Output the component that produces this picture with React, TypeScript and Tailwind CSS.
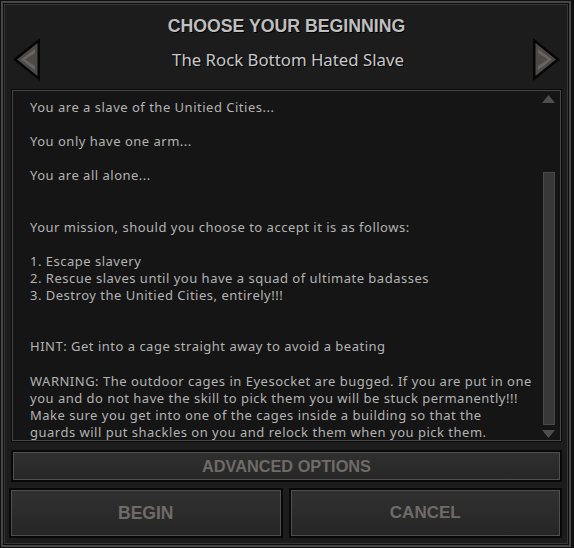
const lines: string[] = [
  "You are a slave of the Unitied Cities...",
  "",
  "You only have one arm...",
  "",
  "You are all alone...",
  "",
  "",
  "Your mission, should you choose to accept it is as follows:",
  "",
  "1. Escape slavery",
  "2. Rescue slaves until you have a squad of ultimate badasses",
  "3. Destroy the Unitied Cities, entirely!!!",
  "",
  "",
  "HINT: Get into a cage straight away to avoid a beating",
  "",
  "WARNING: The outdoor cages in Eyesocket are bugged. If you are put in one",
  "you and do not have the skill to pick them you will be stuck permanently!!!",
  "Make sure you get into one of the cages inside a building so that the",
  "guards will put shackles on you and relock them when you pick them.",
];

function Arrow({ dir }: { dir: "left" | "right" }) {
  return (
    <svg width="30" height="45" viewBox="0 0 30 45" className={dir === "right" ? "-scale-x-100" : ""}>
      <path d="M28 1 L28 44 L1 22.5 Z" fill="#050505" />
      <path d="M25.5 6 L25.5 39 L5 22.5 Z" fill="#4b4a49" />
      <path d="M23 12 L23 16 L13 22.5 L23 29 L23 33 L9 22.5 Z" fill="#686462" />
    </svg>
  );
}

function GameButton({ label, className }: { label: string; className: string }) {
  return (
    <div className={`border-2 border-[#080808] bg-[#080808] ${className}`}>
      <div className="flex h-full items-center justify-center border border-[#4f4f4f] bg-gradient-to-b from-[#303030] to-[#262626]">
        <span className="font-['Liberation_Sans',Arial,sans-serif] font-bold text-[#6f6b67]">{label}</span>
      </div>
    </div>
  );
}

export default function App() {
  return (
    <div className="h-[548px] w-[574px] bg-[#0f0f0f] pl-[1px] pt-[1px]">
      <div className="h-[546px] w-[570px] border-2 border-[#474747] bg-[#0c0c0c] p-[1px]">
        <div className="flex h-full flex-col border border-[#363636] bg-[#1c1c1c] pl-[7px]">
          <div className="grid h-[85px] w-[549px] grid-cols-[30px_1fr_30px]">
            <div className="mt-[32px]">
              <Arrow dir="left" />
            </div>
            <div className="flex flex-col items-center">
              <div className="mt-[11px] text-[17.7px] leading-[20px] font-bold text-[#bfbfbf] font-['Liberation_Sans',Arial,sans-serif] [text-shadow:1px_1px_0_#000]">
                CHOOSE YOUR BEGINNING
              </div>
              <div className="mt-[14px] ml-[3px] text-[16.8px] leading-[20px] text-[#c8c8c8] font-['Noto_Sans',sans-serif] [text-shadow:1px_1px_0_#000]">
                The Rock Bottom Hated Slave
              </div>
            </div>
            <div className="mt-[32px] flex justify-end">
              <Arrow dir="right" />
            </div>
          </div>

          <div className="relative h-[351px] w-[549px] border border-[#464646] bg-[#151515] shadow-[0_0_0_1px_#090909]">
            <div className="pl-[17px] pt-[8px] font-['Noto_Sans',sans-serif] text-[13px] leading-[17px] tracking-[0.5px] text-[#b3b3b3] whitespace-pre">
              {lines.map((l, i) => (
                <div key={i} className="h-[17.1px]">
                  {l}
                </div>
              ))}
            </div>
            <div className="absolute right-[5px] top-[4px] flex h-[344px] w-[13px] flex-col items-center">
              <svg width="13" height="8" viewBox="0 0 13 8">
                <path d="M0 8 L6.5 0 L13 8 Z" fill="#4e4e4e" />
              </svg>
              <div className="mt-[69px] h-[253px] w-[12px] border border-[#4a4a4a] bg-[#383838]" />
              <svg width="13" height="8" viewBox="0 0 13 8" className="mt-[5px]">
                <path d="M0 0 L13 0 L6.5 8 Z" fill="#4e4e4e" />
              </svg>
            </div>
          </div>

          <GameButton label="ADVANCED OPTIONS" className="-ml-[1px] mt-[9px] h-[32px] w-[551px] text-[16.3px]" />

          <div className="-ml-[3px] mt-[6px] flex w-[553px] gap-[6px]">
            <GameButton label="BEGIN" className="h-[50px] flex-1 text-[17.5px]" />
            <GameButton label="CANCEL" className="h-[50px] flex-1 text-[17px]" />
          </div>
        </div>
      </div>
    </div>
  );
}
